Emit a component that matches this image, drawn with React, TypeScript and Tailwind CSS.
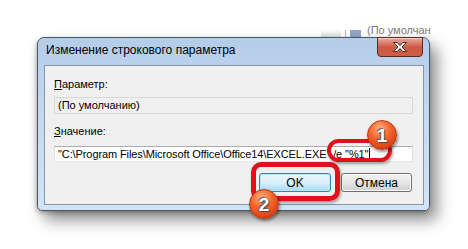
import React from "react";

function Badge({ n, className }: { n: string; className: string }) {
  return (
    <div
      className={`absolute flex h-[30px] w-[30px] items-center justify-center rounded-full border border-[#b8380e] bg-[radial-gradient(circle_at_42%_28%,#ffb48a_0%,#f8692c_38%,#e0461a_70%,#b8300a_100%)] shadow-[1px_2px_3px_rgba(0,0,0,0.45)] ${className}`}
    >
      <span className="font-['Liberation_Sans',Arial,sans-serif] text-[19px] font-bold leading-none text-white [text-shadow:0_0_1px_#555,1px_1px_1px_#444,-1px_-1px_1px_#666]">
        {n}
      </span>
    </div>
  );
}

export default function App() {
  return (
    <div className="relative h-[249px] w-[468px] overflow-hidden bg-white pl-[37px] pt-[37px] font-['Liberation_Sans',Arial,sans-serif] text-[11px] text-black">
      {/* faded remnant of the registry editor behind the dialog */}
      <div className="absolute left-[321px] top-[24px] flex h-[13px] items-end gap-[4px] opacity-60">
        <div className="h-[7px] w-[20px] bg-gradient-to-b from-white to-[#c9c9c9]" />
        <div className="h-[7px] w-[1px] bg-[#888]" />
        <div className="h-[7px] w-[11px] bg-[#4a6fa8]" />
        <span className="ml-[2px] text-[11px] leading-[13px] text-[#222]">(По умолчан</span>
      </div>

      {/* dialog window */}
      <div className="relative h-[174px] w-[393px] rounded-t-[7px] rounded-b-[5px] border border-[#4a5666] bg-gradient-to-b from-[#b4cde8] via-[#c6dbf0] to-[#d3e4f5] shadow-[7px_9px_16px_rgba(0,0,0,0.45),-1px_2px_4px_rgba(0,0,0,0.25)]">
        <div className="flex h-[27px] items-start justify-between">
          <span className="pl-[8px] pt-[5px] text-[12px] leading-[15px] text-black">
            Изменение строкового параметра
          </span>
          <div className="mr-[6px] mt-[-1px] flex h-[20px] w-[46px] items-center justify-center rounded-b-[4px] border border-[#5b2a22] bg-gradient-to-b from-[#e9a99b] via-[#cb5a45] to-[#d45c44] shadow-[inset_0_1px_0_rgba(255,255,255,0.5)]">
            <svg width="16" height="12" viewBox="0 0 16 12">
              <path
                d="M1.5 1.5 L5 1.5 L8 4.5 L11 1.5 L14.5 1.5 L10 6 L14.5 10.5 L11 10.5 L8 7.5 L5 10.5 L1.5 10.5 L6 6 Z"
                fill="#ffffff"
                stroke="#4a2a26"
                strokeWidth="1"
                strokeLinejoin="round"
              />
            </svg>
          </div>
        </div>

        <div className="ml-[6px] flex h-[140px] w-[380px] flex-col border border-[#8396ab] bg-[#f0f0f0] pl-[9px] pr-[10px] pt-[12px]">
          <div className="leading-[13px]">
            <span className="underline">П</span>араметр:
          </div>
          <div className="mt-[6px] flex h-[17px] w-[359px] items-center border border-[#d8d8d8] bg-[#f0f0f0] pl-[3px] leading-[13px]">
            (По умолчанию)
          </div>
          <div className="mt-[11px] leading-[13px]">
            <span className="underline">З</span>начение:
          </div>
          <div className="mt-[8px] flex h-[16px] w-[359px] items-center border border-[#abadb3] border-b-[#e3e9ef] border-l-[#e2e3ea] border-r-[#dbdfe6] bg-white pl-[3px] leading-[13px] tracking-[-0.1px]">
            "C:\Program Files\Microsoft Office\Office14\EXCEL.EXE" /e "%1"
            <span className="ml-[1px] h-[12px] w-[1px] bg-black" />
          </div>
          <div className="mt-[11px] flex justify-end gap-[10px] pr-[1px]">
            <div className="flex h-[19px] w-[72px] items-center justify-center rounded-[3px] border border-[#3c7fb1] bg-gradient-to-b from-[#eaf6fd] via-[#d9f0fc] to-[#a7d9f5] text-[12px] shadow-[inset_0_0_0_1px_#c4e5f6]">
              OK
            </div>
            <div className="flex h-[19px] w-[71px] items-center justify-center rounded-[3px] border border-[#707070] bg-gradient-to-b from-[#f2f2f2] via-[#e6e6e6] to-[#cfcfcf] text-[12px] shadow-[inset_0_0_0_1px_#fcfcfc]">
              Отмена
            </div>
          </div>
        </div>
      </div>

      {/* annotations */}
      <div className="absolute left-[327px] top-[139px] h-[23px] w-[65px] rounded-full border-[4px] border-[#e3101c] shadow-[1px_2px_3px_rgba(0,0,0,0.35)]" />
      <div className="absolute left-[251px] top-[162px] h-[39px] w-[89px] rounded-[10px] border-[5px] border-[#e3101c] shadow-[1px_2px_3px_rgba(0,0,0,0.35)]" />
      <Badge n="1" className="left-[367px] top-[120px]" />
      <Badge n="2" className="left-[249px] top-[189px]" />
    </div>
  );
}
